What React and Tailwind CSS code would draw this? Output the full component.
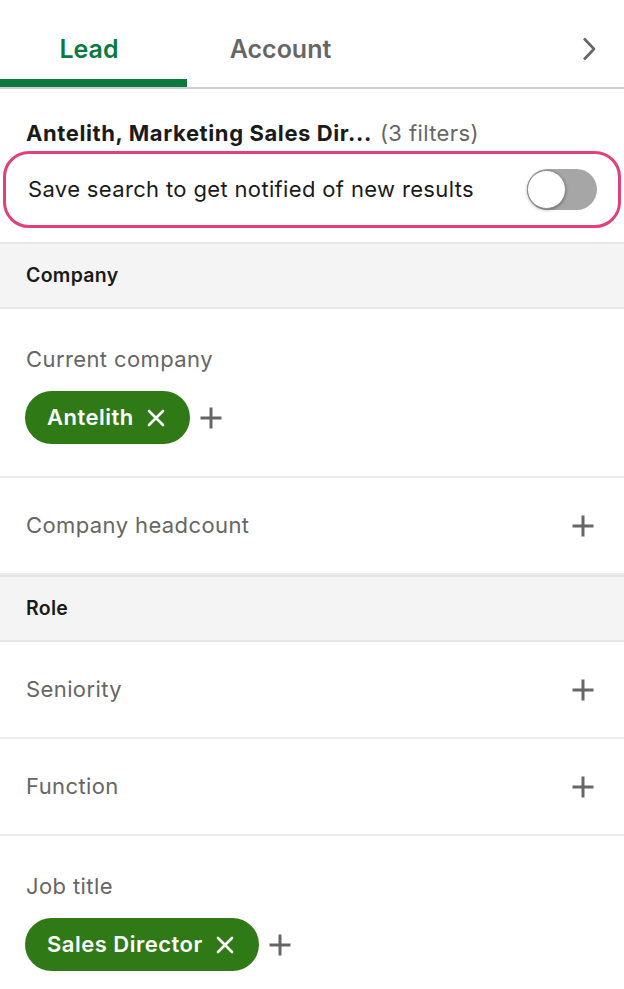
const font = { fontFamily: 'Inter, "Noto Sans", sans-serif' }

function CrossIcon() {
  return (
    <svg width="18" height="18" viewBox="0 0 18 18" fill="none" stroke="currentColor" strokeWidth="2.6" strokeLinecap="round">
      <path d="M2 2l14 14M16 2L2 16" />
    </svg>
  )
}

function PlusIcon() {
  return (
    <svg width="22" height="22" viewBox="0 0 22 22" fill="none" stroke="#666" strokeWidth="3">
      <path d="M11 0.5v21M0.5 11h21" />
    </svg>
  )
}

function Chip({ label }) {
  return (
    <span className="flex h-[53px] items-center gap-[13px] rounded-full bg-[#2f7a17] pl-[22px] pr-[25px] text-[22px] font-semibold tracking-[0.5px] text-white">
      {label}
      <CrossIcon />
    </span>
  )
}

function SectionHeader({ title }) {
  return (
    <div className="flex h-[67px] items-center border-y-2 border-[#e6e6e6] bg-[#f4f4f4] px-[26px] text-[19.5px] font-semibold tracking-[0.3px] text-[#1a1a1a]">
      {title}
    </div>
  )
}

function FilterRow({ label }) {
  return (
    <div className="flex h-[97px] items-center justify-between border-b-2 border-[#ececec] pl-[26px] pr-[30px]">
      <span className="text-[22px] tracking-[0.4px] text-[#666]">{label}</span>
      <PlusIcon />
    </div>
  )
}

function ChipFilter({ label, chip, last }) {
  return (
    <div className={`flex flex-col pl-[25px] pt-[36px] ${last ? 'pb-[20px]' : 'pb-[32px] border-b-2 border-[#ececec]'}`}>
      <span className="pl-px text-[22px] leading-[28px] tracking-[0.4px] text-[#666]">{label}</span>
      <div className="mt-[18px] flex items-center gap-[10px]">
        <Chip label={chip} />
        <PlusIcon />
      </div>
    </div>
  )
}

export default function App() {
  return (
    <div className="min-h-screen w-[624px] bg-white" style={font}>
      {/* tabs */}
      <div className="flex h-[89px] items-stretch border-b-2 border-[#cfcfcf]">
        <div className="flex w-[187px] flex-col">
          <div className="flex flex-1 items-center justify-center pt-[20px] pr-[9px] text-[25px] font-semibold text-[#0b7a41]">Lead</div>
          <div className="h-[8px] bg-[#0b7a41]" />
        </div>
        <div className="flex w-[187px] items-center justify-center pt-[12px] text-[25px] font-semibold text-[#666]">Account</div>
        <div className="ml-auto flex items-center pr-[28px] pt-[10px] text-[#666]">
          <svg width="14" height="24" viewBox="0 0 14 24" fill="none" stroke="currentColor" strokeWidth="2.6" strokeLinejoin="round">
            <path d="M2 1.5l10 10.5L2 22.5" />
          </svg>
        </div>
      </div>

      {/* title */}
      <div className="px-[26px] pt-[30px] text-[22px] leading-[28px]">
        <span className="font-bold tracking-[0.6px] text-[#1a1a1a]">Antelith, Marketing Sales Dir...</span>
        <span className="ml-[8px] tracking-[0.4px] text-[#666]">(3 filters)</span>
      </div>

      {/* save search */}
      <div className="mx-[3px] mt-[4px] flex h-[77px] items-center justify-between rounded-[26px] border-[3px] border-[#e2407b] pl-[22px] pr-[21px]">
        <span className="text-[22px] tracking-[0.35px] text-[#1a1a1a]">Save search to get notified of new results</span>
        <div className="flex h-[41px] w-[70px] items-center rounded-full bg-[#a6a6a6]">
          <div className="h-[39px] w-[39px] rounded-full border border-[#8a8a8a] bg-white shadow-[0_1px_3px_rgba(0,0,0,0.35)]" />
        </div>
      </div>

      <div className="mt-[14px]">
        <SectionHeader title="Company" />
        <ChipFilter label="Current company" chip="Antelith" />
        <FilterRow label="Company headcount" />
        <SectionHeader title="Role" />
        <FilterRow label="Seniority" />
        <FilterRow label="Function" />
        <ChipFilter label="Job title" chip="Sales Director" last />
      </div>
    </div>
  )
}
